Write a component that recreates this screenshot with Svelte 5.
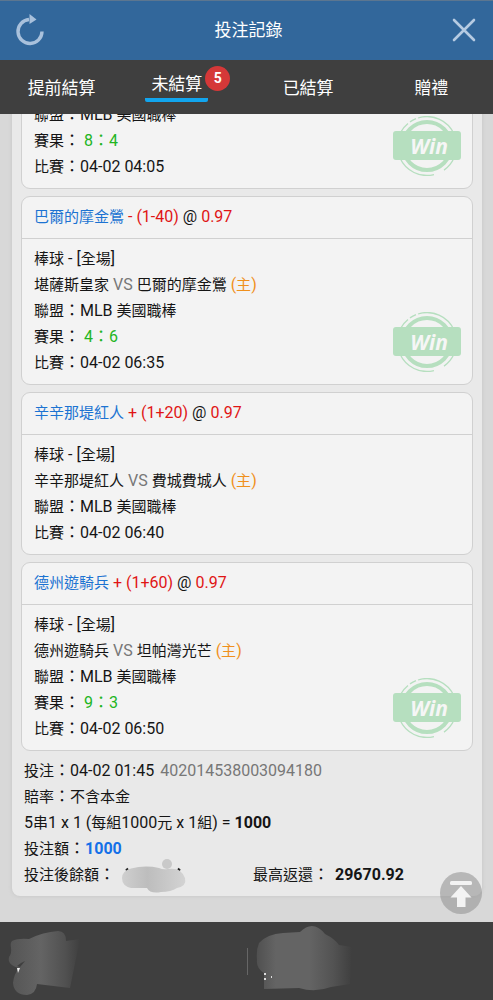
<script>
  const tabs = [
    { label: '提前結算' },
    { label: '未結算', count: 5 },
    { label: '已結算' },
    { label: '贈禮' }
  ];
  let active = $state(1);

  const bets = [
    { pick: '巴爾的摩金鶯', line: '- (1-40)', odds: '0.97', away: '堪薩斯皇家', home: '巴爾的摩金鶯', score: '4：6', time: '04-02 06:35' },
    { pick: '辛辛那堤紅人', line: '+ (1+20)', odds: '0.97', away: '辛辛那堤紅人', home: '費城費城人', score: '', time: '04-02 06:40' },
    { pick: '德州遊騎兵', line: '+ (1+60)', odds: '0.97', away: '德州遊騎兵', home: '坦帕灣光芒', score: '9：3', time: '04-02 06:50' }
  ];

  // Han text is set one step smaller than the Latin text beside it.
  const split = (s) =>
    s.split(/([\u2e80-\u9fff]+)/).filter(Boolean).map((t) => ({ t, han: /[\u2e80-\u9fff]/.test(t) }));
</script>

{#snippet mix(s)}{#each split(s) as part}{#if part.han}<span class="han">{part.t}</span>{:else}{part.t}{/if}{/each}{/snippet}

{#snippet win()}
  <svg class="win" viewBox="0 0 68 60" role="img" aria-label="Win">
    <g fill="none" stroke="#b6dfbf">
      <circle cx="34" cy="30" r="24" stroke-width="4" />
      <path d="M8 15.800A29.500 29.500 0 0 1 15 7.500M17 5.900A29.500 29.500 0 0 1 23 2.700M25 2A29.500 29.500 0 0 1 61 18" stroke-width="1.300" />
      <path d="M7 42A29.500 29.500 0 0 0 41 58.600M51 54.100A29.500 29.500 0 0 0 61 42" stroke-width="1.300" />
    </g>
    <rect y="15" width="68" height="29" rx="3" fill="#b6dfbf" />
    <text x="36" y="38" text-anchor="middle">Win</text>
  </svg>
{/snippet}

{#snippet result(score)}
  <p>{@render mix('賽果：')}{' '}<span class="score">{@render mix(score)}</span></p>
{/snippet}

<div class="app">
  <header>
    <button class="icon" aria-label="重新整理">
      <svg width="30" height="32" viewBox="0 0 30 32">
        <path d="M14 5.500A12 12 0 1 0 27 17.500" fill="none" stroke="#a9c1dc" stroke-width="3.400" />
        <path d="M14.500 0 21.500 5.500 14.500 10Z" fill="#a9c1dc" />
      </svg>
    </button>
    <h1>投注記錄</h1>
    <button class="icon" aria-label="關閉">
      <svg width="24" height="24" viewBox="0 0 24 24">
        <path d="M2 2 22 22M22 2 2 22" stroke="#b6cbe2" stroke-width="2.600" stroke-linecap="round" />
      </svg>
    </button>
  </header>

  <nav>
    {#each tabs as tab, i}
      <button class="tab" class:active={i === active} onclick={() => (active = i)}>
        <span class="label">{tab.label}{#if tab.count}<b class="count">{tab.count}</b>{/if}</span>
      </button>
    {/each}
  </nav>

  <main>
    <section class="panel">
      <div class="cards">
        <article class="card">
          <div class="body">
            <div class="rows">
              <p>{@render mix('聯盟：MLB 美國職棒')}</p>
              {@render result('8：4')}
              <p>{@render mix('比賽：04-02 04:05')}</p>
            </div>
            {@render win()}
          </div>
        </article>
        {#each bets as bet}
          <article class="card">
            <h2><span class="pick">{@render mix(bet.pick)}</span> <span class="red">{bet.line}</span> @ <span class="red">{bet.odds}</span></h2>
            <div class="body">
              <div class="rows">
                <p>{@render mix('棒球 - [全場]')}</p>
                <p>{@render mix(bet.away)} <span class="grey">VS</span> {@render mix(bet.home)} <span class="home">{@render mix('(主)')}</span></p>
                <p>{@render mix('聯盟：MLB 美國職棒')}</p>
                {#if bet.score}{@render result(bet.score)}{/if}
                <p>{@render mix('比賽：' + bet.time)}</p>
              </div>
              {#if bet.score}{@render win()}{/if}
            </div>
          </article>
        {/each}
      </div>

      <div class="summary">
        <p>{@render mix('投注：04-02 01:45')} <span class="grey id">402014538003094180</span></p>
        <p>{@render mix('賠率：不含本金')}</p>
        <p>{@render mix('5串1 x 1 (每組1000元 x 1組) = ')}<b>1000</b></p>
        <p>{@render mix('投注額：')}<b class="stake">1000</b></p>
        <div class="totals">
          <p class="balance">
            <span>{@render mix('投注後餘額：')}</span>
            <svg width="66" height="36" viewBox="0 0 66 36" aria-hidden="true">
              <defs>
                <linearGradient id="smear">
                  <stop offset="0" stop-color="#cfcfcf" />
                  <stop offset=".4" stop-color="#bdbdbd" />
                  <stop offset=".65" stop-color="#c6c6c6" />
                  <stop offset="1" stop-color="#d3d3d3" />
                </linearGradient>
              </defs>
              <path d="M5 12.500 7 10.500M57 10.500 59 12.500" fill="none" stroke="#222" stroke-width="2" />
              <path d="M10 10.500Q24 7 38 10Q42 12 47 11Q60 9 64 20Q66 28 56 30Q50 34 40 34Q29 36 26 30L10 30Q1 28 1 20Q1 13 10 10.500Z" fill="url(#smear)" />
              <circle cx="46" cy="6" r="5" fill="#c9c9c9" />
            </svg>
          </p>
          <p>{@render mix('最高返還：')}{' '}<b class="return">29670.92</b></p>
        </div>
      </div>
    </section>
  </main>

  <button class="top" aria-label="回到頂部">
    <svg width="42" height="42" viewBox="0 0 42 42">
      <rect x="10" y="9" width="22" height="4" rx="1.500" fill="#f3f3f3" />
      <path d="M21 14 31.500 25.500H25.500V35H17V25.500H10.500Z" fill="#f3f3f3" />
    </svg>
  </button>

  <footer>
    <svg width="100" height="78" viewBox="0 0 100 78" aria-hidden="true">
      <defs>
        <linearGradient id="fadeA">
          <stop offset="0" stop-color="#545454" />
          <stop offset=".45" stop-color="#646464" />
          <stop offset=".8" stop-color="#505050" />
          <stop offset="1" stop-color="#3f3f3f" />
        </linearGradient>
      </defs>
      <path d="M12 19Q18 16 29 17Q43 10 58 9Q66 9 66 19L80 17L70 66L37 62Q36 72 27 73Q14 73 13 61Q14 52 19 46Q7 43 9 35Q12 31 11 26Q10 21 12 19Z" fill="url(#fadeA)" />
      <path d="M17 46H20L18 51Z" fill="#eee" />
      <path d="M17 44Q20 41 25 39L20 45Z" fill="#3f3f3f" />
    </svg>
    <div class="half">
      <svg width="140" height="78" viewBox="0 0 140 78" aria-hidden="true">
        <defs>
          <linearGradient id="fadeB">
            <stop offset="0" stop-color="#505050" />
            <stop offset=".2" stop-color="#646464" />
            <stop offset=".55" stop-color="#646464" />
            <stop offset=".8" stop-color="#535353" />
            <stop offset="1" stop-color="#3f3f3f" />
          </linearGradient>
        </defs>
        <path d="M12 21Q20 12 36 11L53 10Q66 -3 78 12Q88 17 92 23L105 25L103 62L84 65Q68 71 52 66L17 67V51Q9 46 10 38Q9 28 12 21Z" fill="url(#fadeB)" />
        <path d="M17 51h2v2h-2zM17 56h2v2h-2zM24 54h1v2h-1z" fill="#ddd" />
      </svg>
    </div>
  </footer>
</div>

<style>
  :global(body) { margin: 0; }
  .app {
    display: flex;
    flex-direction: column;
    height: 100vh;
    position: relative;
    font: 16px/26px Roboto, "Noto Sans CJK TC", sans-serif;
    color: #151515;
    background: #d8d8d8;
  }
  p, h1, h2 { margin: 0; font-weight: 400; }
  button { border: 0; padding: 0; background: none; font: inherit; color: inherit; cursor: pointer; }
  svg { display: block; }
  .han { font-size: 15px; }

  header {
    display: flex;
    align-items: center;
    justify-content: space-between;
    flex: none;
    padding: 13px 17px 14px 15px;
    border-top: 1px solid #5c7690;
    background: #32679b;
    color: #fff;
  }
  header h1 { font-size: 17px; line-height: 28px; }

  nav {
    display: grid;
    grid-template-columns: repeat(4, 1fr);
    flex: none;
    background: #3f3f3f;
    color: #fff;
  }
  .tab { font-size: 17px; line-height: 28px; padding: 14px 0 12px; }
  .tab.active { padding: 10px 16px 12px 0; }
  .label { display: inline-block; position: relative; }
  .active .label { padding: 0 6px; border-bottom: 4px solid #12a5ee; border-radius: 2px; }
  .count {
    position: absolute;
    top: -4px;
    right: -22px;
    width: 25px;
    border-radius: 50%;
    background: #d53838;
    font-size: 14px;
    line-height: 25px;
    text-align: center;
  }

  main { flex: 1; min-height: 0; overflow: hidden; padding: 0 11px 0 12px; }
  .panel {
    margin-top: -20px;
    padding: 0 0 8px 9px;
    border-radius: 8px;
    background: #e9e9e9;
    box-shadow: 0 0 4px #c4c4c4;
  }
  .cards { display: grid; gap: 7px; margin-right: 9px; }
  .card { border: 1px solid #d0d0d0; border-radius: 9px; background: #f3f3f3; }
  .card h2 { padding: 7px 12px 8px; border-bottom: 1px solid #d0d0d0; font-size: 16px; line-height: 26px; }
  .body { display: flex; align-items: flex-end; padding: 7px 11px 8px 12px; }
  .rows { flex: 1; }
  .win { width: 68px; height: 60px; margin-bottom: 4px; }
  .win text { font: italic 700 21px "Open Sans", "Noto Sans", sans-serif; fill: #f6f6f6; }
  .pick { color: #1c73d2; }
  .red { color: #e01515; }
  .grey { color: #777; }
  .home { color: #f0901c; }
  .score { color: #22b522; }

  .summary { padding: 7px 0 0 3px; }
  .id { margin-left: 2px; }
  .stake { color: #1470e8; }
  .return { margin-left: 2px; }
  .totals { display: grid; grid-template-columns: 1fr 1fr; }
  .balance { display: flex; gap: 6px; height: 26px; }
  .balance svg { margin-top: -4px; }

  .top {
    position: absolute;
    right: 11px;
    bottom: 86px;
    border-radius: 50%;
    background: rgba(150, 150, 150, 0.6);
  }

  footer {
    display: grid;
    grid-template-columns: 1fr 1fr;
    flex: none;
    background: #3f3f3f;
  }
  .half {
    background: linear-gradient(#666, #666) 0 26px / 1px 27px no-repeat;
  }
</style>
